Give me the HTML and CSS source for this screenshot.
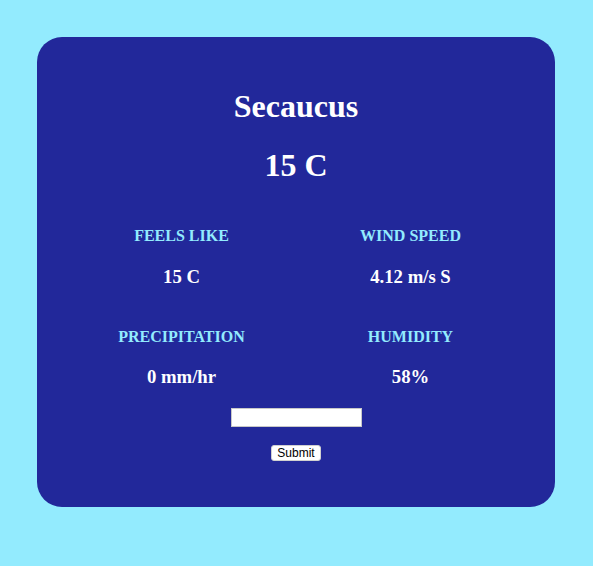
FILE: index.html
```html
<!DOCTYPE html>
<html>
<head>
<meta charset="utf-8">
<link rel="stylesheet" href="styles.css">
</head>
<body>
<div class="card">
  <h1 class="city">Secaucus</h1>
  <h1 class="temp">15 C</h1>
  <div class="grid">
    <div class="cell">
      <h4 class="label">FEELS LIKE</h4>
      <h3 class="value">15 C</h3>
    </div>
    <div class="cell">
      <h4 class="label">WIND SPEED</h4>
      <h3 class="value">4.12 m/s S</h3>
    </div>
    <div class="cell row2">
      <h4 class="label">PRECIPITATION</h4>
      <h3 class="value">0 mm/hr</h3>
    </div>
    <div class="cell row2">
      <h4 class="label">HUMIDITY</h4>
      <h3 class="value">58%</h3>
    </div>
  </div>
  <form class="form">
    <input class="field" type="text">
    <button class="submit" type="button">Submit</button>
  </form>
</div>
</body>
</html>
```

FILE: styles.css
```css
html, body {
  margin: 0;
  padding: 0;
}
body {
  background: #93ebfe;
  font-family: "Liberation Serif", "Times New Roman", serif;
  padding: 37px 38px 58px 37px;
  min-height: 566px;
  box-sizing: border-box;
}
.card {
  width: 518px;
  height: 470px;
  box-sizing: border-box;
  background: #22289a;
  border-radius: 25px;
  padding: 51px 30px 0 30px;
  text-align: center;
  color: #ffffff;
}
h1, h3, h4 {
  margin: 0;
  font-weight: bold;
}
.city {
  font-size: 32px;
  line-height: 37px;
}
.temp {
  font-size: 32px;
  line-height: 37px;
  margin-top: 22px;
}
.grid {
  display: grid;
  grid-template-columns: 1fr 1fr;
  margin-top: 43px;
}
.cell.row2 {
  margin-top: 40px;
}
.label {
  font-size: 16px;
  line-height: 18px;
  color: #93ebfe;
}
.value {
  font-size: 18.72px;
  line-height: 22px;
  margin-top: 21px;
}
.cell.row2 .value {
  margin-top: 20px;
}
.form {
  display: flex;
  flex-direction: column;
  align-items: center;
  margin-top: 20px;
}
.field {
  width: 131px;
  height: 19px;
  box-sizing: border-box;
  border: 1px solid #c8c8c8;
  background: #ffffff;
  padding: 0;
  margin: 0;
}
.submit {
  margin-top: 18px;
  width: 50px;
  height: 16px;
  box-sizing: border-box;
  padding: 0;
  border: 1px solid #d0d0d0;
  border-radius: 3px;
  background: #ffffff;
  color: #000000;
  font-family: "Liberation Sans", Arial, sans-serif;
  font-size: 12px;
  line-height: 14px;
}
```
